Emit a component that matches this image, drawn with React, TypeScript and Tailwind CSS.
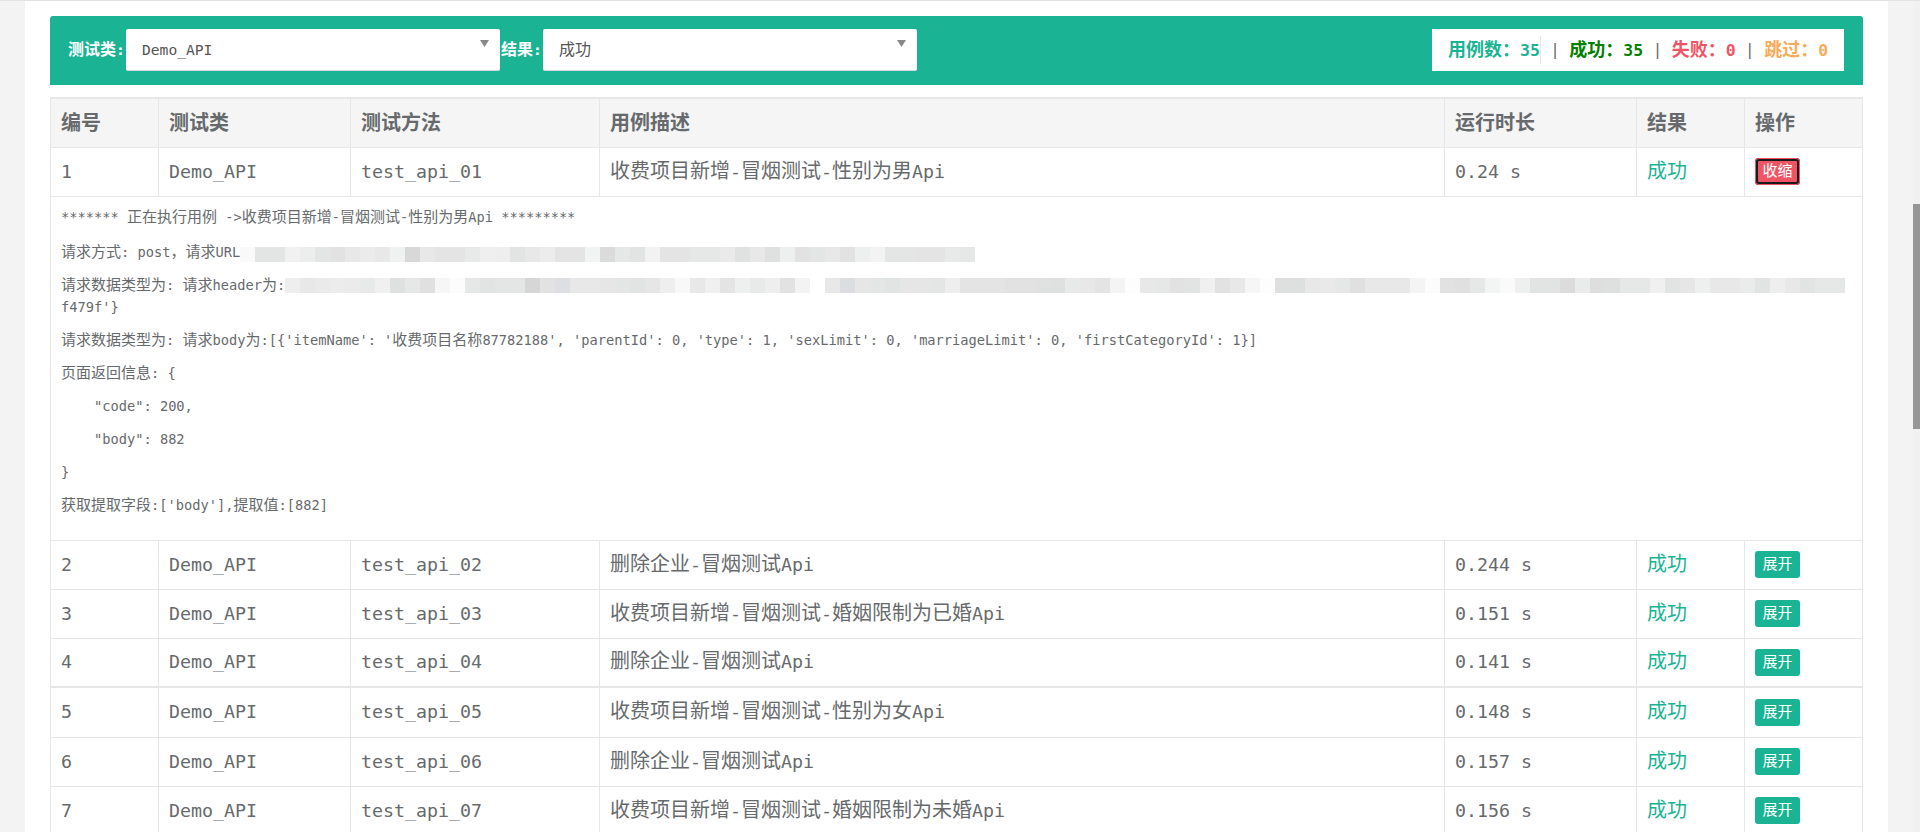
import React from "react";

const monoFont = "font-['DejaVu_Sans_Mono','Noto_Sans_CJK_SC',monospace]";

interface CaseRow {
  id: number;
  method: string;
  desc: string;
  time: string;
  open?: boolean;
  thick?: boolean;
}

const rows: CaseRow[] = [
  { id: 1, method: "test_api_01", desc: "收费项目新增-冒烟测试-性别为男Api", time: "0.24 s", open: true },
  { id: 2, method: "test_api_02", desc: "删除企业-冒烟测试Api", time: "0.244 s" },
  { id: 3, method: "test_api_03", desc: "收费项目新增-冒烟测试-婚姻限制为已婚Api", time: "0.151 s" },
  { id: 4, method: "test_api_04", desc: "删除企业-冒烟测试Api", time: "0.141 s" },
  { id: 5, method: "test_api_05", desc: "收费项目新增-冒烟测试-性别为女Api", time: "0.148 s", thick: true },
  { id: 6, method: "test_api_06", desc: "删除企业-冒烟测试Api", time: "0.157 s" },
  { id: 7, method: "test_api_07", desc: "收费项目新增-冒烟测试-婚姻限制为未婚Api", time: "0.156 s" },
];

// pixelated parts of the log, one colour per 15px cell
const urlMosaic =
  "f9f9f9 e3e5e4 e3e5e4 f0f1f0 eceeed e4e6e5 e2e2e2 e8e8e8 ebebeb e8e8e8 f0f2f1 d8d8d8 e8e8e8 e4e4e4 e4e4e4 e8eaea efefef eeeeee e2e4e4 e8e8e8 ececec e4e4e4 e4e4e4 f2f4f3 dbdbdb e6e8e8 e2e4e3 f2f2f2 e4e4e4 e4e4e4 e6e8e7 e6e8e7 eaeaea e0e2e2 e8e8e8 dfe1e0 eef0ef e2e2e2 e4e6e6 e8e8e8 e2e2e2 eef0f0 f3f3f3 e4e6e5 e4e6e5 e4e4e4 e4e4e4 e8eaea e6e8e8".split(" ");
const headerMosaic =
  "eeeeee e8e8e8 eaeaea ececec ebebeb e8eaea f0f0f0 dfe1e0 e6e8e7 e0e0e0 f6f6f6 fcfcfc e6e8e8 e2e4e4 e4e6e5 e4e6e5 d6d6d6 e2e2e2 dedfe2 e8e8e8 e8e8e8 e6e6e6 e4e6e5 e2e4e3 e6e6e6 eeeeee f8f8f8 e8e8e8 f0f0f0 e4e4e4 eef0ef e8eaea eeeeee e2e2e2 f3f3f3 ffffff e8e8e8 dbdde0 e6e6e6 e4e6e6 e0e4e2 e6e6e6 e6e6e6 e4e6e6 eeeeee e4e4e4 e4e4e4 e4e4e4 e2e2e2 e2e2e2 e0e2e1 dfe1e0 e8eaea e8e8e8 e4e4e4 f4f4f4 fdfdfd e8e8e8 e6e8e7 e2e2e2 e2e4e3 f0f0f0 e2e2e2 e8e8e8 f6f6f6 fdfdfd dee0df dee0df e8e8e8 e9e9e9 e6e8e7 e0e0e0 e8e8e8 e8e8e8 e8e8e8 f4f4f4 fcfcfc e2e2e2 e0e0e0 e6e8e7 f3f5f4 fafafa eef0ef e2e4e3 e2e4e3 dcdcdc eaecec dedede dee0df e6e8e8 e6e8e8 f0f0f0 e2e4e4 e6e6e6 eef0ef e8e8e8 e8e8e8 eaecec e2e4e3 eeeeee e8e8e8 e2e4e4 e6e8e8 e6e8e8".split(" ");

// latin runs are scaled so DejaVu Mono gets the narrow advance of the original font
function Mixed({ text }: { text: string }) {
  const parts = text.split(/([\u3000-\u9fff\uff00-\uffef]+)/).filter(Boolean);
  return (
    <>
      {parts.map((part, i) =>
        /[\u3000-\u9fff\uff00-\uffef]/.test(part) ? (
          <span key={i}>{part}</span>
        ) : (
          <span key={i} className="text-[0.9135em] whitespace-pre">
            {part}
          </span>
        )
      )}
    </>
  );
}

function Mosaic({ cells, className = "" }: { cells: string[]; className?: string }) {
  return (
    <span className={`inline-flex align-middle h-[15px] ${className}`}>
      {cells.map((c, i) => (
        <span key={i} className="block w-[15px] h-[15px]" style={{ backgroundColor: `#${c}` }} />
      ))}
    </span>
  );
}

function FakeSelect({ value }: { value: string }) {
  return (
    <div className="relative w-[374px] h-[42px] bg-white rounded-[2px] border-b border-[#d5d8da] flex items-center pl-[16px] text-[16px] text-[#555]">
      <Mixed text={value} />
      <svg className="absolute right-[11px] top-[11px]" width="9" height="7" viewBox="0 0 9 7">
        <path d="M0 0h9L4.500 7z" fill="#888" />
      </svg>
    </div>
  );
}

function Stat({ label, value, color }: { label: string; value: string; color: string }) {
  return (
    <span className={`font-bold ${color}`}>
      <Mixed text={`${label}\uff1a${value}`} />
    </span>
  );
}

function Sep() {
  return <span className="text-[#676a6c] text-[15.800px] whitespace-pre"> | </span>;
}

function LogLine({ children, className = "mb-[11px]" }: { children: React.ReactNode; className?: string }) {
  return <p className={`leading-[22px] ${className}`}>{children}</p>;
}

function DetailRow() {
  return (
    <tr>
      <td colSpan={7} className="border border-[#e7e7e7] px-[10px] pt-[9px] pb-[13px] text-[15px]">
        <LogLine className="mb-[13px]">
          <Mixed text="******* 正在执行用例 ->收费项目新增-冒烟测试-性别为男Api *********" />
        </LogLine>
        <LogLine>
          <Mixed text={"请求方式: post\uff0c请求URL"} />
          <Mosaic cells={urlMosaic} className="translate-y-[2px]" />
        </LogLine>
        <LogLine>
          <Mixed text="请求数据类型为: 请求header为:" />
          <Mosaic cells={headerMosaic} />
          <br />
          <Mixed text="f479f'}" />
        </LogLine>
        <LogLine>
          <Mixed text="请求数据类型为: 请求body为:[{'itemName': '收费项目名称87782188', 'parentId': 0, 'type': 1, 'sexLimit': 0, 'marriageLimit': 0, 'firstCategoryId': 1}]" />
        </LogLine>
        <LogLine>
          <Mixed text="页面返回信息: {" />
        </LogLine>
        <LogLine>
          <Mixed text={'    "code": 200,'} />
        </LogLine>
        <LogLine>
          <Mixed text={'    "body": 882'} />
        </LogLine>
        <LogLine>
          <Mixed text="}" />
        </LogLine>
        <LogLine>
          <Mixed text="获取提取字段:['body'],提取值:[882]" />
        </LogLine>
      </td>
    </tr>
  );
}

export default function App() {
  const th = "border border-[#e7e7e7] px-[10px] text-left font-bold";
  const td = "border border-[#e7e7e7] px-[10px]";
  const textTd = `${td} pb-[2px]`;

  return (
    <div className={`h-[832px] w-[1920px] overflow-hidden flex bg-[#f3f3f4] border-t border-[#e0e2e6] text-[#676a6c] ${monoFont}`}>
      <div className="w-[25px] shrink-0" />

      <main className="w-[1863px] shrink-0 bg-white px-[25px] pt-[15px]">
        <div className="h-[69px] bg-[#1ab394] rounded-t-[3px] flex items-center pl-[18px] pr-[19px] pb-[1px] text-[16px]">
          <span className="text-white font-bold w-[58px]">
            <Mixed text="测试类:" />
          </span>
          <FakeSelect value="Demo_API" />
          <span className="text-white font-bold w-[42px] ml-[1px]">
            <Mixed text="结果:" />
          </span>
          <FakeSelect value="成功" />
          <div className="ml-auto h-[42px] w-[412px] bg-white flex items-center pl-[16px] text-[18px] whitespace-nowrap">
            <span className="border-r border-[#e7e7e7]">
              <Stat label="用例数" value="35" color="text-[#1ab394]" />
            </span>
            <Sep />
            <Stat label="成功" value="35" color="text-[#008000]" />
            <Sep />
            <Stat label="失败" value="0" color="text-[#ed5565]" />
            <Sep />
            <Stat label="跳过" value="0" color="text-[#f8ac59]" />
          </div>
        </div>

        <table className="mt-[12px] w-full table-fixed border-collapse border-t-2 border-[#e7e7e7] text-[20px]">
          <thead>
            <tr className="h-[49px] bg-[#f5f5f5]">
              <th className={`${th} w-[108px]`}>编号</th>
              <th className={`${th} w-[192px]`}>测试类</th>
              <th className={`${th} w-[249px]`}>测试方法</th>
              <th className={`${th} w-[845px]`}>用例描述</th>
              <th className={`${th} w-[192px]`}>运行时长</th>
              <th className={`${th} w-[108px]`}>结果</th>
              <th className={th}>操作</th>
            </tr>
          </thead>
          <tbody>
            {rows.map((r) => (
              <React.Fragment key={r.id}>
                <tr className={r.thick ? "h-[50px] border-t-2 border-[#e7e7e7]" : "h-[49px]"}>
                  <td className={textTd}><Mixed text={String(r.id)} /></td>
                  <td className={textTd}><Mixed text="Demo_API" /></td>
                  <td className={textTd}><Mixed text={r.method} /></td>
                  <td className={textTd}><Mixed text={r.desc} /></td>
                  <td className={textTd}><Mixed text={r.time} /></td>
                  <td className={`${textTd} text-[#1ab394]`}>成功</td>
                  <td className={td}>
                    {r.open ? (
                      <button className="block w-[45px] h-[27px] rounded-[4px] bg-[#ed5565] text-white text-[15px] leading-none shadow-[inset_0_0_0_1px_#ed5565,inset_0_0_0_3px_#1a1a1a]">
                        收缩
                      </button>
                    ) : (
                      <button className="block w-[45px] h-[27px] rounded-[3px] bg-[#1ab394] text-white text-[15px] leading-none">
                        展开
                      </button>
                    )}
                  </td>
                </tr>
                {r.open && <DetailRow />}
              </React.Fragment>
            ))}
          </tbody>
        </table>
      </main>

      <div className="w-[25px] shrink-0" />
      <div className="w-[7px] shrink-0 bg-[#f1f1f1]">
        <div className="mt-[203px] h-[225px] bg-[#969696]" />
      </div>
    </div>
  );
}
